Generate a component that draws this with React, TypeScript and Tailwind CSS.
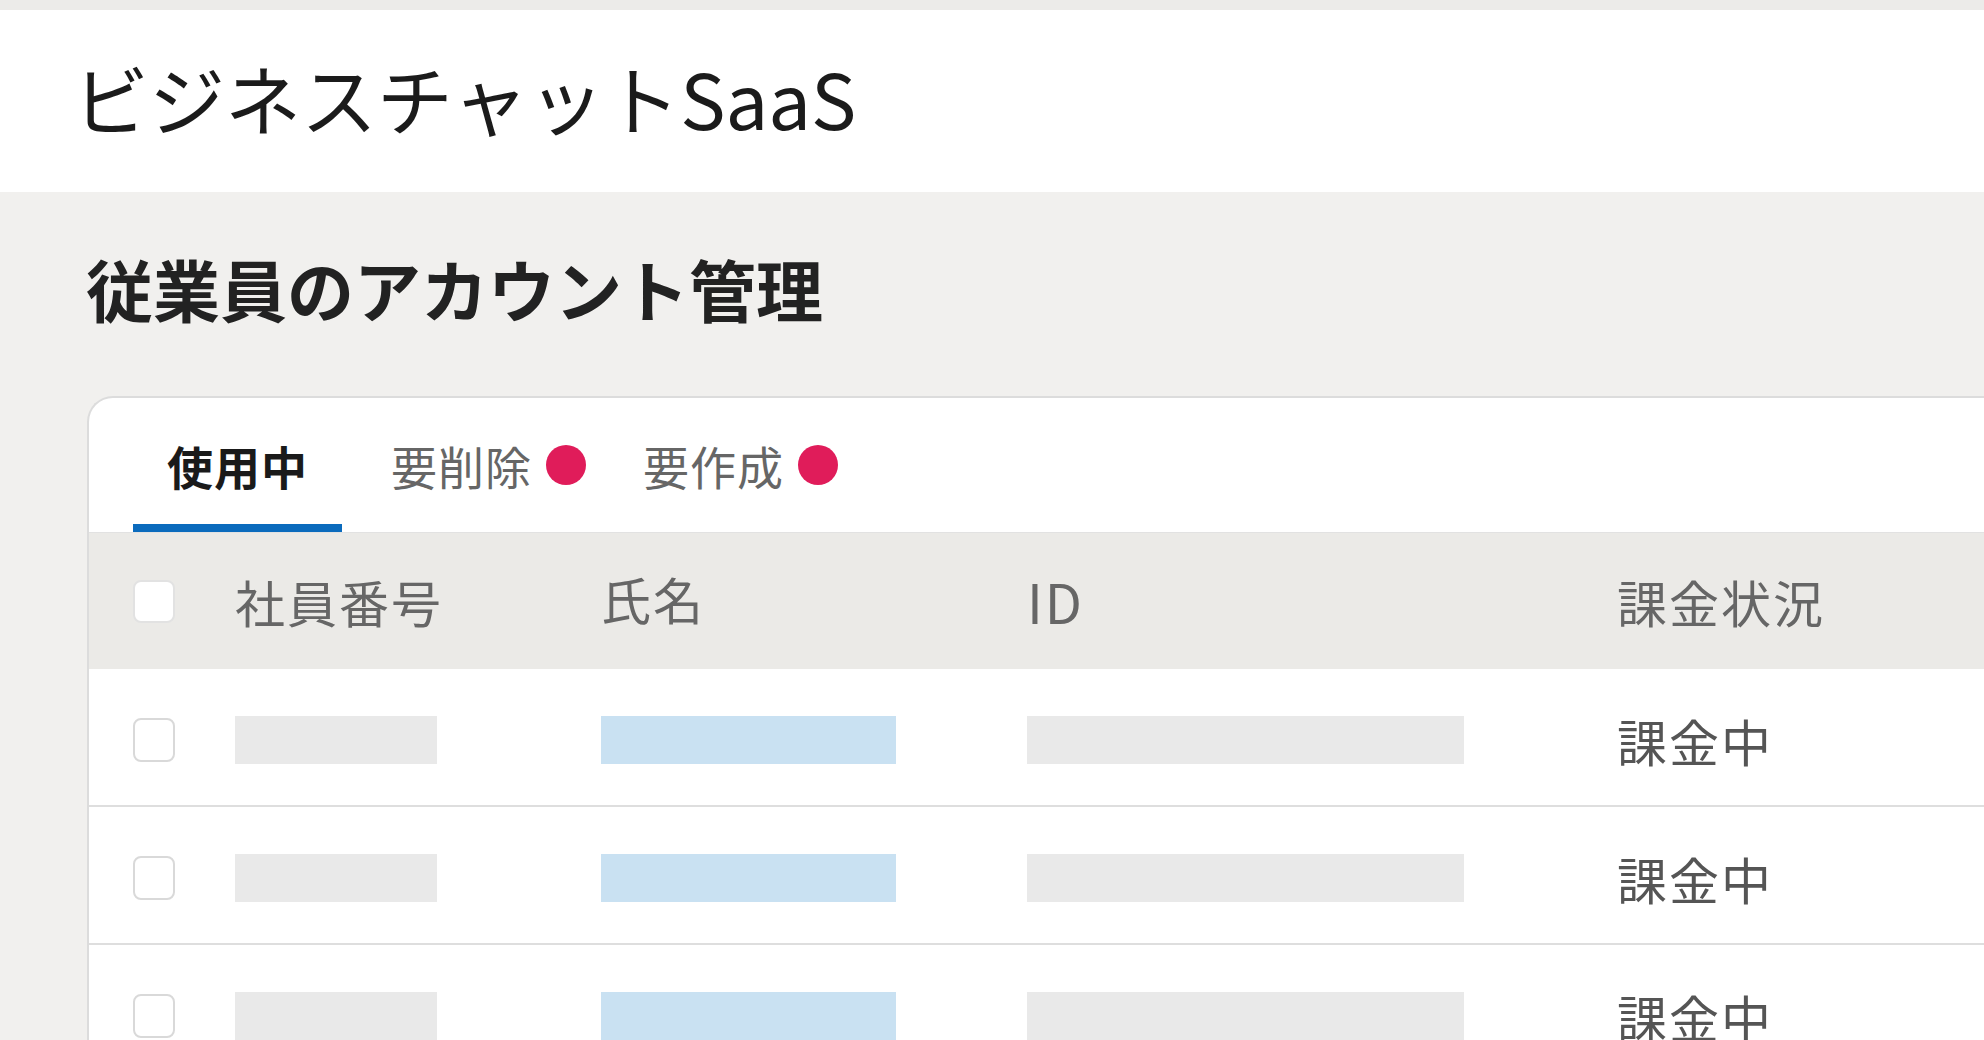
import React from "react";

function Checkbox() {
  return (
    <div className="w-[42px] h-[44px] rounded-[8px] border-2 border-[#d9d9d9] bg-white shrink-0" />
  );
}

function Dot() {
  return <span className="ml-[14px] inline-block w-[40px] h-[40px] rounded-full bg-[#e01c5a] shrink-0" />;
}

function Row() {
  return (
    <div className="flex items-center h-[138px] pt-[6px] border-b-2 border-[#dedede] pl-[44px]">
      <div className="w-[102px] shrink-0 flex items-center">
        <Checkbox />
      </div>
      <div className="w-[366px] shrink-0">
        <div className="w-[202px] h-[48px] bg-[#e9e9e9]" />
      </div>
      <div className="w-[426px] shrink-0">
        <div className="w-[295px] h-[48px] bg-[#c9e1f2]" />
      </div>
      <div className="w-[590px] shrink-0">
        <div className="w-[437px] h-[48px] bg-[#e9e9e9]" />
      </div>
      <div className="shrink-0 text-[50px] leading-none tracking-[2px] text-[#555555]">課金中</div>
    </div>
  );
}

export default function App() {
  return (
    <div className="w-[1984px] h-[1040px] overflow-hidden bg-[#f1f0ee] font-['Noto_Sans_CJK_JP',sans-serif]">
      <div className="h-[10px] bg-[#ecebe9]" />
      <div className="h-[182px] bg-white flex items-center pl-[73px] pb-[8px]">
        <h1 className="text-[76px] leading-none font-normal text-[#1b1b1b]">ビジネスチャットSaaS</h1>
      </div>
      <h2 className="mt-[62px] ml-[86px] text-[67px] leading-none font-bold text-[#222222]">
        従業員のアカウント管理
      </h2>
      <div className="mt-[75px] ml-[87px] bg-white border-t-2 border-l-2 border-[#dcdcdc] rounded-tl-[26px]">
        <div className="flex items-stretch h-[135px] pl-[44px] border-b border-[#e2e2e2]">
          <div className="relative flex items-center px-[34px] text-[46px] leading-none tracking-[1px] font-bold text-[#1a1a1a]">
            使用中
            <div className="absolute left-0 right-0 bottom-0 h-[8px] bg-[#0b6bbd]" />
          </div>
          <div className="flex items-center ml-[49px] text-[46px] leading-none tracking-[1px] text-[#666666]">
            要削除
            <Dot />
          </div>
          <div className="flex items-center ml-[57px] text-[46px] leading-none tracking-[1px] text-[#666666]">
            要作成
            <Dot />
          </div>
        </div>
        <div className="flex items-center h-[136px] bg-[#ebeae7] pl-[44px] text-[50px] leading-none tracking-[2px] text-[#666666]">
          <div className="w-[102px] shrink-0 flex items-center">
            <div className="w-[42px] h-[43px] rounded-[8px] border-2 border-[#e2e2e2] bg-white" />
          </div>
          <div className="w-[366px] shrink-0">社員番号</div>
          <div className="w-[426px] shrink-0 -mt-[6px]">氏名</div>
          <div className="w-[590px] shrink-0 text-[54px]">ID</div>
          <div className="shrink-0">課金状況</div>
        </div>
        <Row />
        <Row />
        <Row />
      </div>
    </div>
  );
}
